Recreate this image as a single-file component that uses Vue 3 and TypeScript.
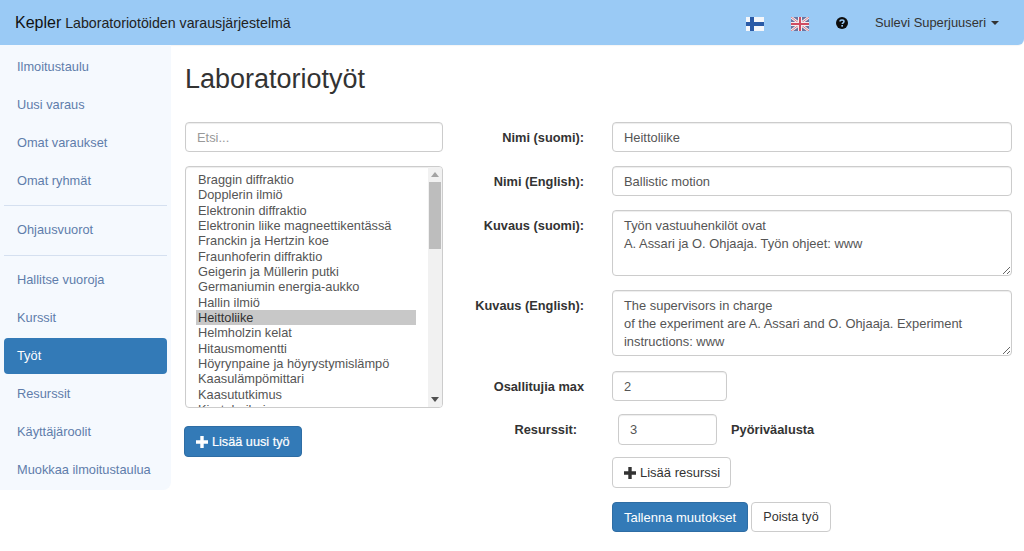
<script setup lang="ts">
const navGroups: string[][] = [
  ['Ilmoitustaulu', 'Uusi varaus', 'Omat varaukset', 'Omat ryhmät'],
  ['Ohjausvuorot'],
  ['Hallitse vuoroja', 'Kurssit', 'Työt', 'Resurssit', 'Käyttäjäroolit', 'Muokkaa ilmoitustaulua'],
]
const works: string[] = [
  'Braggin diffraktio', 'Dopplerin ilmiö', 'Elektronin diffraktio', 'Elektronin liike magneettikentässä',
  'Franckin ja Hertzin koe', 'Fraunhoferin diffraktio', 'Geigerin ja Müllerin putki', 'Germaniumin energia-aukko',
  'Hallin ilmiö', 'Heittoliike', 'Helmholzin kelat', 'Hitausmomentti', 'Höyrynpaine ja höyrystymislämpö',
  'Kaasulämpömittari', 'Kaasututkimus', 'Kiertoheiluri',
]
const descFi = 'Työn vastuuhenkilöt ovat\nA. Assari ja O. Ohjaaja. Työn ohjeet: www'
const descEn = 'The supervisors in charge\nof the experiment are A. Assari and O. Ohjaaja. Experiment instructions: www'
</script>

<template>
  <div class="page">
    <header class="navbar">
      <div class="brand"><span class="brand-name">Kepler</span> Laboratoriotöiden varausjärjestelmä</div>
      <div class="nav-right">
        <svg class="flag" viewBox="0 0 18 14" width="18" height="14">
          <rect width="18" height="14" fill="#f4f6fa" />
          <rect x="4" width="4" height="14" fill="#2a5aa6" />
          <rect y="5" width="18" height="4" fill="#2a5aa6" />
        </svg>
        <svg class="flag" viewBox="0 0 18 14" width="18" height="14">
          <rect width="18" height="14" fill="#6a74a0" />
          <path d="M0 0L18 14M18 0L0 14" stroke="#f3eef0" stroke-width="2.6" />
          <path d="M0 0L18 14M18 0L0 14" stroke="#d8707f" stroke-width="0.9" />
          <path d="M9 0V14M0 7H18" stroke="#f3eef0" stroke-width="4" />
          <path d="M9 0V14M0 7H18" stroke="#d04c62" stroke-width="2" />
        </svg>
        <svg class="help" viewBox="0 0 12 12" width="12" height="12">
          <circle cx="6" cy="6" r="6" fill="#0d0d0d" />
          <path d="M4 4.6C4 3.4 5 3 6 3C7.1 3 8 3.6 8 4.6C8 5.8 6.2 5.8 6.2 7.1" fill="none" stroke="#9acaf5" stroke-width="1.5" />
          <rect x="5.3" y="8" width="1.7" height="1.6" fill="#9acaf5" />
        </svg>
        <span class="user">Sulevi Superjuuseri<span class="caret"></span></span>
      </div>
    </header>

    <div class="content">
      <aside class="sidebar">
        <template v-for="(group, g) in navGroups" :key="g">
          <hr v-if="g > 0" class="divider" />
          <a v-for="item in group" :key="item" class="nav-item" :class="{ active: item === 'Työt' }">{{ item }}</a>
        </template>
      </aside>

      <main class="main">
        <h1>Laboratoriotyöt</h1>
        <div class="columns">
          <section class="left">
            <input class="control" placeholder="Etsi..." />
            <div class="listbox">
              <div class="options">
                <div v-for="w in works" :key="w" class="option" :class="{ selected: w === 'Heittoliike' }">{{ w }}</div>
              </div>
              <div class="scrollbar">
                <svg viewBox="0 0 8 5" width="8" height="5" class="arrow"><path d="M0 5L4 0L8 5Z" fill="#a3a3a3" /></svg>
                <div class="track"><div class="thumb"></div></div>
                <svg viewBox="0 0 8 5" width="8" height="5" class="arrow"><path d="M0 0L4 5L8 0Z" fill="#505050" /></svg>
              </div>
            </div>
            <button class="btn primary add-work">
              <svg class="plus" viewBox="0 0 12 12" width="12" height="12"><path d="M4.3 0H7.7V4.3H12V7.7H7.7V12H4.3V7.7H0V4.3H4.3Z" fill="currentColor" /></svg>
              Lisää uusi työ
            </button>
          </section>

          <form class="form" @submit.prevent>
            <div class="row r14 nudge">
              <label>Nimi (suomi):</label>
              <input class="control wide" value="Heittoliike" />
            </div>
            <div class="row r14 nudge">
              <label>Nimi (English):</label>
              <input class="control wide" value="Ballistic motion" />
            </div>
            <div class="row r14 top">
              <label>Kuvaus (suomi):</label>
              <textarea class="control wide area" :value="descFi"></textarea>
            </div>
            <div class="row r15 top">
              <label>Kuvaus (English):</label>
              <textarea class="control wide area" :value="descEn"></textarea>
            </div>
            <div class="row r13">
              <label>Osallitujia max</label>
              <input class="control max" value="2" />
            </div>
            <div class="row r12 resource">
              <label>Resurssit:</label>
              <input class="control qty" value="3" />
              <strong>Pyöriväalusta</strong>
            </div>
            <div class="actions r14">
              <button class="btn add-resource">
                <svg class="plus" viewBox="0 0 12 12" width="12" height="12"><path d="M4.3 0H7.7V4.3H12V7.7H7.7V12H4.3V7.7H0V4.3H4.3Z" fill="currentColor" /></svg>
                Lisää resurssi
              </button>
            </div>
            <div class="actions">
              <button class="btn primary save">Tallenna muutokset</button>
              <button class="btn delete">Poista työ</button>
            </div>
          </form>
        </div>
      </main>
    </div>
  </div>
</template>

<style>
html, body { margin: 0; background: #fff; overflow: hidden; }
</style>

<style scoped>
.page { font-family: "Liberation Sans", Arial, sans-serif; font-size: 13px; color: #333; width: 1024px; height: 551px; overflow: hidden; }
.navbar { height: 45px; background: #9acaf5; border-radius: 0 0 6px 0; display: flex; align-items: center; justify-content: space-between; box-sizing: border-box; padding: 0 25px 0 15px; box-shadow: 0 1px 1px rgba(0,0,0,.04); }
.brand { font-size: 14.2px; color: #222; }
.brand-name { font-size: 16px; color: #111; }
.nav-right { display: flex; align-items: center; }
.flag { margin-right: 27px; margin-top: 3px; }
.help { margin-right: 27px; }
.user { font-size: 12.9px; color: #333; display: inline-flex; align-items: center; margin-top: -1px; }
.caret { width: 0; height: 0; border-left: 4px solid transparent; border-right: 4px solid transparent; border-top: 4px solid #333; margin-left: 5px; margin-top: 1px; }

.content { display: flex; align-items: flex-start; }
.sidebar { width: 171px; height: 445px; box-sizing: border-box; background: #f5f9fe; border-radius: 0 0 8px 0; padding: 4px 4px 0; display: flex; flex-direction: column; flex: none; }
.nav-item { height: 36px; line-height: 36px; margin-bottom: 2px; padding-left: 13px; border-radius: 4px; font-size: 12.8px; color: #5f7dab; }
.nav-item.active { background: #337ab7; color: #fff; }
.divider { border: 0; border-top: 1px solid #d5e0f0; margin: 4px 0 6px; height: 0; width: 100%; }
.divider:nth-of-type(2) { margin-top: 5px; }

.main { padding: 17px 0 0 14px; flex: 1; min-width: 0; }
h1 { margin: 0 0 26px; font-size: 27px; font-weight: 400; line-height: 34px; color: #333; }
.columns { display: flex; align-items: flex-start; }
.left { width: 258px; flex: none; display: flex; flex-direction: column; }

.control { box-sizing: border-box; height: 30px; border: 1px solid #ccc; border-radius: 4px; padding: 0 11px; font: 12.9px "Liberation Sans", Arial, sans-serif; color: #555; background: #fff; box-shadow: inset 0 1px 1px rgba(0,0,0,.075); outline: 0; display: block; }
.control::placeholder { color: #999; }
.wide { width: 400px; }
.nudge .control { padding-top: 1px; }
.nudge label { padding-top: 1px; }
.area { height: 66px; padding: 6px 11px; line-height: 18px; resize: vertical; }
.max { width: 115px; }
.qty { width: 99px; height: 31px; }

.listbox { margin-top: 14px; height: 242px; box-sizing: border-box; border: 1px solid #ccc; border-radius: 4px; display: flex; overflow: hidden; box-shadow: inset 0 1px 1px rgba(0,0,0,.075); }
.options { flex: 1; overflow: hidden; padding: 5px 12px 0 10px; font-size: 12.8px; color: #555; }
.option { height: 15.33px; line-height: 16px; padding-left: 2px; white-space: nowrap; }
.option.selected { background: #c8c8c8; color: #333; }
.scrollbar { width: 14px; flex: none; background: #f1f1f1; display: flex; flex-direction: column; align-items: center; }
.arrow { flex: none; margin: 5px 0; }
.track { flex: 1; width: 100%; }
.thumb { height: 67px; margin: 0 1px; background: #bdbdbd; }

.btn { box-sizing: border-box; height: 31px; padding: 0 11px; border: 1px solid #ccc; border-radius: 4px; background: #fff; color: #333; font: 13px "Liberation Sans", Arial, sans-serif; display: inline-flex; align-items: center; gap: 4px; white-space: nowrap; }
.btn.primary { background: #337ab7; border-color: #2e6da4; color: #fff; }
.plus { flex: none; }
.add-work { margin: 18px 0 0 -1px; align-self: flex-start; width: 118px; font-size: 12.7px; -webkit-text-stroke: 0.2px #fff; }

.form { display: flex; flex-direction: column; }
.row { display: flex; align-items: center; }
.row.top { align-items: flex-start; }
.r14 { margin-bottom: 14px; }
.r15 { margin-bottom: 15px; }
.r13 { margin-bottom: 13px; }
.r12 { margin-bottom: 12px; }
label { width: 141px; margin-right: 28px; flex: none; text-align: right; font-size: 12.8px; font-weight: 700; color: #333; }
.row.top label { padding-top: 8px; }
.resource label { width: 134px; margin-right: 41px; }
.resource strong { margin-left: 14px; font-size: 12.8px; color: #333; }
.actions { display: flex; padding-left: 169px; gap: 3px; }
.add-resource { width: 119px; }
.save { width: 136px; justify-content: center; height: 30px; }
.delete { width: 80px; justify-content: center; height: 30px; font-size: 12.6px; }
</style>
